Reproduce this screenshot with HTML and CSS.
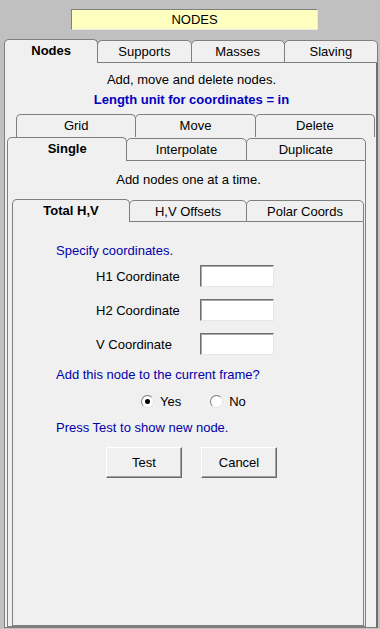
FILE: index.html
```html
<!DOCTYPE html>
<html lang="en">
<head>
    <meta charset="UTF-8">
    <title>Nodes</title>
    <link rel="stylesheet" href="styles.css">
</head>
<body>
    <div class="app">
        <div class="title">NODES</div>

        <div class="tabs tabs-main">
            <div class="tab active">Nodes</div>
            <div class="tab">Supports</div>
            <div class="tab">Masses</div>
            <div class="tab">Slaving</div>
        </div>

        <div class="panel panel-main">
            <p class="note first">Add, move and delete nodes.</p>
            <p class="note unit">Length unit for coordinates = in</p>

            <div class="tabs tabs-back">
                <div class="tab">Grid</div>
                <div class="tab">Move</div>
                <div class="tab">Delete</div>
            </div>
            <div class="tabs tabs-front">
                <div class="tab active">Single</div>
                <div class="tab">Interpolate</div>
                <div class="tab">Duplicate</div>
            </div>

            <div class="panel panel-node">
                <p class="note node-note">Add nodes one at a time.</p>

                <div class="tabs tabs-coord">
                    <div class="tab active">Total H,V</div>
                    <div class="tab">H,V Offsets</div>
                    <div class="tab">Polar Coords</div>
                </div>

                <div class="panel panel-coord">
                    <p class="hint">Specify coordinates.</p>

                    <div class="fields">
                        <label for="h1">H1 Coordinate</label>
                        <input type="text" id="h1">
                        <label for="h2">H2 Coordinate</label>
                        <input type="text" id="h2">
                        <label for="v">V Coordinate</label>
                        <input type="text" id="v">
                    </div>

                    <p class="hint frame">Add this node to the current frame?</p>

                    <div class="radios">
                        <span class="radio checked"></span><span class="radio-label">Yes</span>
                        <span class="radio"></span><span class="radio-label">No</span>
                    </div>

                    <p class="hint press">Press Test to show new node.</p>

                    <div class="buttons">
                        <button>Test</button>
                        <button>Cancel</button>
                    </div>
                </div>
            </div>
        </div>
    </div>
</body>
</html>
```

FILE: styles.css
```css
body {
    margin: 0;
    background: #c0c0c0;
    font-family: "Liberation Sans", Arial, sans-serif;
    font-size: 13px;
    color: #000;
}
.app {
    width: 380px;
    height: 629px;
    display: flex;
    flex-direction: column;
    overflow: hidden;
}
.title {
    margin: 9px 0 0 71px;
    width: 247px;
    height: 21px;
    box-sizing: border-box;
    background: #ffffc0;
    border-top: 1px solid #808080;
    border-left: 1px solid #808080;
    border-right: 1px solid #e8e8e8;
    border-bottom: 1px solid #e8e8e8;
    text-align: center;
    line-height: 19px;
}

/* tab strips */
.tabs {
    display: flex;
    align-items: flex-end;
    height: 24px;
    flex-shrink: 0;
}
.tab {
    flex: 1;
    height: 23px;
    box-sizing: border-box;
    margin-left: -1px;
    border: 1px solid #7f7f7f;
    border-radius: 5px 5px 0 0;
    background: #f0f0f0;
    text-align: center;
    line-height: 21px;
    white-space: nowrap;
}
.tab:first-child { margin-left: 0; }
.tab.active {
    height: 24px;
    border-bottom: none;
    font-weight: bold;
    position: relative;
    z-index: 1;
}
.tabs-main {
    margin: 9px 2px 0 4px;
}

/* panels */
.panel {
    flex: 1;
    display: flex;
    flex-direction: column;
    background: #f0f0f0;
    box-sizing: border-box;
    border-left: 1px solid #7f7f7f;
    border-right: 1px solid #7f7f7f;
    border-bottom: 1px solid #7f7f7f;
}
.panel-main {
    margin: 0 0 1px 4px;
    width: 374px;
    border-right: 2px solid #6e6e6e;
    padding: 0 0 0 2px;
}
.note {
    margin: 0;
    text-align: center;
    line-height: 16px;
}
.note.first { margin-top: 9px; }
.note.unit {
    margin-top: 4px;
    color: #0000c0;
    font-weight: bold;
}
.tabs-back {
    margin: 6px 0 0 9px;
    width: 359px;
    height: 23px;
}
.tabs-back .tab { height: 23px; border-bottom: none; }
.tabs-front {
    width: 359px;
    height: 24px;
}
.panel-node {
    width: 359px;
    flex: 1;
    padding-left: 4px;
}
.node-note { margin-top: 11px; }
.tabs-coord {
    margin-top: 11px;
    width: 352px;
    height: 23px;
}
.tabs-coord .tab { height: 22px; }
.tabs-coord .tab.active { height: 23px; }
.panel-coord {
    width: 352px;
    flex: 1;
    padding-left: 43px;
}

/* coordinate form */
.hint {
    margin: 0;
    color: #0000aa;
    line-height: 16px;
}
.panel-coord > .hint:first-child { margin-top: 21px; }
.fields {
    display: grid;
    grid-template-columns: 86px 74px;
    column-gap: 18px;
    row-gap: 12px;
    align-items: center;
    margin: 6px 0 0 40px;
}
.fields input {
    width: 74px;
    height: 22px;
    box-sizing: border-box;
    margin: 0;
    padding: 0 3px;
    font: inherit;
    background: #fff;
    border-top: 1px solid #6f6f6f;
    border-left: 1px solid #6f6f6f;
    border-right: 1px solid #e6e6e6;
    border-bottom: 1px solid #e6e6e6;
    box-shadow: inset 1px 1px 0 #a8a8a8;
}
.hint.frame { margin-top: 12px; }
.radios {
    display: flex;
    align-items: center;
    height: 16px;
    margin: 10px 0 0 85px;
}
.radio {
    width: 13px;
    height: 13px;
    box-sizing: border-box;
    border-radius: 50%;
    background: #fff;
    border: 1px solid;
    border-color: #7a7a7a #e4e4e4 #e4e4e4 #7a7a7a;
    position: relative;
}
.radio.checked::after {
    content: "";
    position: absolute;
    left: 3px;
    top: 3px;
    width: 5px;
    height: 5px;
    border-radius: 50%;
    background: #000;
}
.radio-label {
    margin: 0 29px 0 6px;
}
.hint.press { margin-top: 11px; }
.buttons {
    display: flex;
    gap: 19px;
    margin: 11px 0 0 50px;
}
.buttons button {
    width: 76px;
    height: 31px;
    margin: 0;
    font: inherit;
    background: #f0f0f0;
    border: 1px solid;
    border-color: #ffffff #6a6a6a #6a6a6a #ffffff;
    box-shadow: inset -1px -1px 0 #a0a0a0;
}
```
